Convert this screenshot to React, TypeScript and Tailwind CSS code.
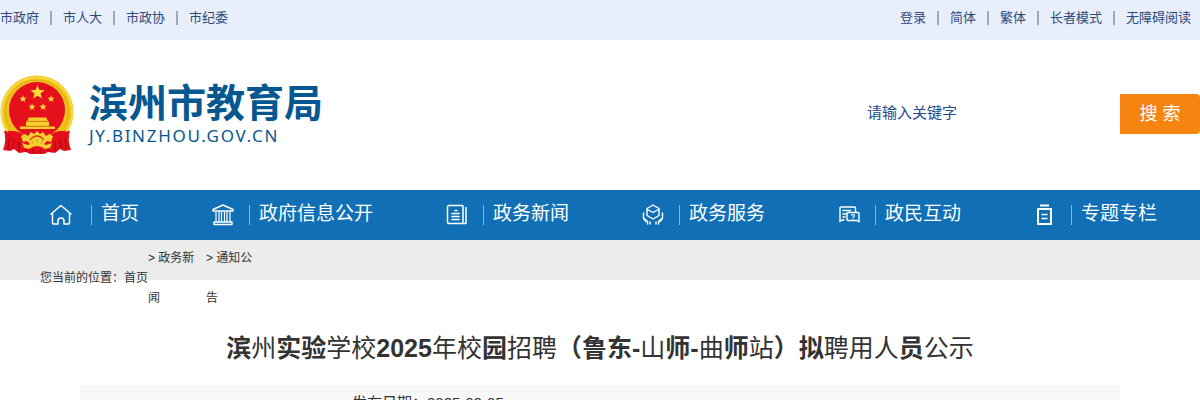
import type { ReactNode } from 'react';

const leftLinks = ['市政府', '市人大', '市政协', '市纪委'];
const rightLinks = ['登录', '简体', '繁体', '长者模式', '无障碍阅读'];

function LinkRow({ items }: { items: string[] }) {
  return (
    <ul className="flex items-center">
      {items.map((t, i) => (
        <li key={t} className="flex items-center">
          {i > 0 && <span className="mx-[11px] h-3.5 w-0.5 bg-[#9aaac4]" />}
          <a href="#" className="text-[13px] leading-9 text-[#2c4a7c]">{t}</a>
        </li>
      ))}
    </ul>
  );
}

const star = (cx: number, cy: number, r: number) =>
  Array.from({ length: 10 }, (_, i) => {
    const a = -Math.PI / 2 + (i * Math.PI) / 5;
    const q = i % 2 ? r * 0.42 : r;
    return `${(cx + q * Math.cos(a)).toFixed(2)},${(cy + q * Math.sin(a)).toFixed(2)}`;
  }).join(' ');

function Emblem() {
  return (
    <svg width="74" height="80" viewBox="0 0 74 80" aria-hidden="true">
      <circle cx="37" cy="37" r="36.500" fill="#f0c01c" />
      <path d="M4 56 Q11 54 15 60 L59 60 Q63 54 70 56 Q67 64 71 75 L64 76 L60 74 L55 78 L48 77 L44 79 H30 L26 77 L19 78 L14 74 L10 76 L3 75 Q7 64 4 56Z" fill="#e3101c" />
      <path d="M9 63 L8 74 M14 64 L13 73 M19 67 L19 76 M25 71 L26 76 M49 71 L48 76 M55 67 L55 76 M60 64 L61 73 M65 63 L66 74 M33 74 V78 M41 74 V78" stroke="#ad0914" strokeWidth="1.3" />
      <path d="M8 57 A35 35 0 1 1 66 57" fill="none" stroke="#f8dc3b" strokeWidth="2" />
      <path d="M10 53 A31.500 31.500 0 1 1 64 53" fill="none" stroke="#d9a216" strokeWidth="0.7" />
      <circle cx="37" cy="35" r="28" fill="#e60f1c" />
      <polygon points={star(37.5, 17.5, 7.5)} fill="#fbdc3c" />
      <polygon points={star(23, 24, 3.8)} fill="#fbdc3c" />
      <polygon points={star(51, 24, 3.8)} fill="#fbdc3c" />
      <polygon points={star(32, 32, 3.8)} fill="#fbdc3c" />
      <polygon points={star(43, 32, 3.8)} fill="#fbdc3c" />
      <path d="M29 42.500H46L48 46H27Z M26 46.500H49V51H26Z M20 51.500H55V54H20Z" fill="#f6cf2e" />
      <path d="M28 46.300H47 M26 51.200H49" stroke="#c98a12" strokeWidth="0.7" />
      <path d="M6 57 Q17 54 25 61 L22 69 Q14 62 5 63Z M68 57 Q57 54 49 61 L52 69 Q60 62 69 63Z" fill="#e60f1c" />
      <path d="M21 61 L25 59 L28 61 L31 57 L34 59 L37 56 L40 59 L43 57 L46 61 L49 59 L53 61 L51 67 L47 66 L44 69 H30 L27 66 L23 67Z" fill="#f6cf2e" />
      <path d="M30 65 Q37 57 44 65" fill="none" stroke="#e03a18" strokeWidth="1.3" />
      <path d="M22 68 L28 70 Q37 63 46 70 L52 68 L50 73 L45 74 Q37 68 29 74 L24 73Z" fill="#f6cf2e" />
      <path d="M32 66 L33 69 M37 64 V68 M42 66 L41 69" stroke="#c98a12" strokeWidth="0.7" />
    </svg>
  );
}

function Icon({ children, w = 22 }: { children: ReactNode; w?: number }) {
  return (
    <svg width={w} height="22" viewBox={`0 0 ${w} 22`} fill="none" stroke="currentColor" strokeWidth="1.5" strokeLinecap="round" strokeLinejoin="round" aria-hidden="true">
      {children}
    </svg>
  );
}

const nav: { label: string; icon: ReactNode }[] = [
  {
    label: '首页',
    icon: (
      <Icon w={26}>
        <path d="M1 10 11 1.500l10 8.500M2.500 9.500V19a1 1 0 0 0 1 1H8v-3a3 3 0 0 1 6 0v3h4.500a1 1 0 0 0 1-1V9.500" />
      </Icon>
    ),
  },
  {
    label: '政府信息公开',
    icon: (
      <Icon>
        <path d="M1 5.500 11 1l10 4.500v1.500H1ZM2 18h18v2.500H2Z" strokeWidth="1.400" />
        <path d="M4 8v9.500M7 8v9.500M9.500 8v9.500M12.500 8v9.500M15 8v9.500M18 8v9.500" strokeWidth="1.200" />
      </Icon>
    ),
  },
  {
    label: '政务新闻',
    icon: (
      <Icon>
        <path d="M3 1.500H16a1 1 0 0 1 1 1v17H3A1.500 1.500 0 0 1 1.500 18V3A1.500 1.500 0 0 1 3 1.500ZM17 19.500h3V3.500M9 6.500h2M6 9.500h7M6 12.500h7M6 15.500h7" />
      </Icon>
    ),
  },
  {
    label: '政务服务',
    icon: (
      <Icon>
        <path d="m11 1 6 3.500v7L11 15l-6-3.500v-7ZM5.500 5.500 11 8.500l5.500-3M1.500 9v5l4 3.500v2.500M20.500 9v5l-4 3.500v2.500M1.500 14.500 4 17.500M20.500 14.500 18 17.500M8 18v2M14 18v2" strokeWidth="1.400" />
      </Icon>
    ),
  },
  {
    label: '政民互动',
    icon: (
      <Icon>
        <path d="M6 16H4L2 17.500V4a1 1 0 0 1 1-1h13.500a1 1 0 0 1 1 1v3.500M5 6.500h7.500M5 10h3M5 13h2M10 8.500h10a1 1 0 0 1 1 1V18l-2-1.500h-9a1 1 0 0 1-1-1v-6a1 1 0 0 1 1-1Z" strokeWidth="1.400" />
        <path d="M13.500 11q1.500-1 2.500 0t-1 2.200M15 14.800v.2" strokeWidth="1.200" />
      </Icon>
    ),
  },
  {
    label: '专题专栏',
    icon: (
      <Icon>
        <path d="M4 5h13V20H4ZM6 1.500h9" strokeWidth="2" strokeLinecap="butt" strokeLinejoin="miter" />
        <path d="M7.500 10.500h6M7.500 14.500h6" strokeWidth="1.300" strokeLinecap="butt" />
      </Icon>
    ),
  },
];

const titleParts: [string, boolean][] = [
  ['滨', true], ['州', false], ['实验', true], ['学校', false], ['2025', true],
  ['年校', false], ['园', true], ['招聘', false], ['（鲁东-', true], ['山', false],
  ['师-', true], ['曲', false], ['师', true], ['站', false], ['）拟', true],
  ['聘用人', false], ['员', true], ['公示', false],
];

export default function App() {
  return (
    <div lang="zh-CN" className="bg-white font-['Liberation_Sans','Noto_Sans_CJK_SC',sans-serif] text-[#333]">
      <div className="flex h-10 items-start justify-between bg-[#e8eefa] pr-[9px]">
        <LinkRow items={leftLinks} />
        <LinkRow items={rightLinks} />
      </div>

      <header className="flex h-[150px] items-center justify-between">
        <a href="#" className="flex items-center gap-[15px] text-[#075890]">
          <Emblem />
          <span className="flex flex-col pb-2.5">
            <span className="font-['Noto_Sans_CJK_SC',sans-serif] text-[39px] leading-[52px] font-bold">滨州市教育局</span>
            <span className="font-['Noto_Sans',sans-serif] text-[17px] leading-5 tracking-widest">JY.BINZHOU.GOV.CN</span>
          </span>
        </a>
        <form className="flex items-start pb-0.5" onSubmit={(e) => e.preventDefault()}>
          <input
            type="text"
            aria-label="请输入关键字"
            placeholder="请输入关键字"
            className="h-9 w-[253px] text-[15px] text-[#234a8c] outline-none placeholder:text-[#234a8c]"
          />
          <button type="submit" className="h-10 w-20 rounded-r bg-[#f58411] text-lg text-white">搜 索</button>
        </form>
      </header>

      <nav className="flex h-[50px] items-center justify-between bg-[#1170b5] pr-[43px] pl-[50px] text-white">
        {nav.map((n) => (
          <a key={n.label} href="#" className="flex items-center whitespace-nowrap">
            {n.icon}
            <span className="ml-[15px] h-5 w-px bg-[#82b8df]" />
            <span className="ml-[9px] pb-0.5 text-[19px] leading-7">{n.label}</span>
          </a>
        ))}
      </nav>

      <div className="h-10 bg-[#ececec]">
        <div className="flex h-[76px] items-center pl-10 text-xs leading-10">
          <span>您当前的位置：</span>
          <a href="#">首页</a>
          <a href="#" className="w-[58px]">&gt; 政务新<br />闻</a>
          <a href="#" className="w-[58px]">&gt; 通知公<br />告</a>
        </div>
      </div>

      <main className="px-20 pt-12">
        <h1 className="text-center text-[25px] leading-10">
          {titleParts.map(([t, bold], i) => (
            <span key={i} className={bold ? 'font-bold' : 'font-normal'}>{t}</span>
          ))}
        </h1>
        <div className="mt-[17px] bg-[#f8f8f8] pl-[272px] text-[15px] leading-9">
          发布日期：2025-09-05
        </div>
      </main>
    </div>
  );
}
